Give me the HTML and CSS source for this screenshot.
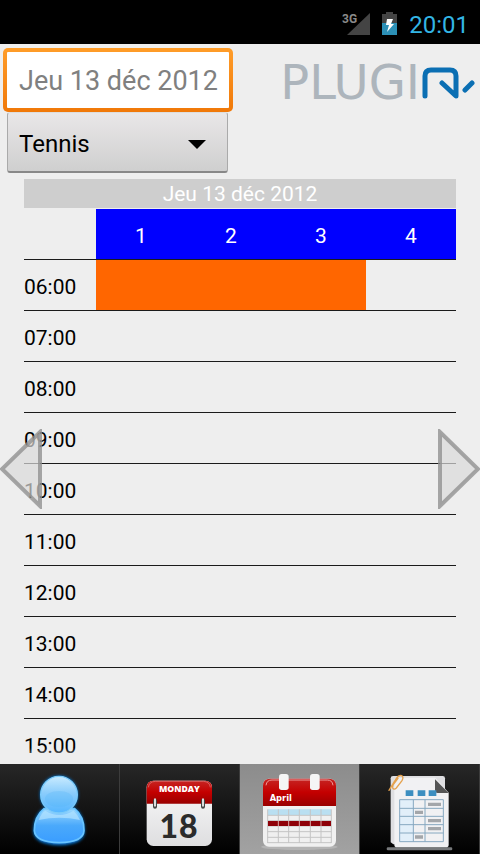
FILE: index.html
```html
<!DOCTYPE html>
<html lang="fr">
<head>
<meta charset="utf-8">
<meta name="viewport" content="width=device-width, initial-scale=1">
<title>Plugin</title>
<link rel="stylesheet" href="styles.css">
</head>
<body>
<div class="status">
  <svg class="status-icons" width="58" height="28" viewBox="0 0 58 28" aria-hidden="true">
    <text class="network" x="1" y="14">3G</text>
    <path d="M29 4V26H6Z" fill="#444"/>
    <path d="M45 3h7v3h-7z" fill="#444"/>
    <path d="M41 5h15v21h-15z" fill="#444"/>
    <path d="M41 14h15v12h-15z" fill="#2c90b6"/>
    <path d="M46 10h6l-2 5h3l-7 8 2-7h-3z" fill="#fff"/>
  </svg>
  <span class="clock">20:01</span>
</div>

<header class="header">
  <div class="filters">
    <input class="date" type="text" value="Jeu 13 déc 2012" aria-label="Date" readonly>
    <div class="sport">
      <select class="sport-select" aria-label="Sport"><option>Tennis</option></select>
      <svg class="caret" width="18" height="10" viewBox="0 0 18 10" aria-hidden="true"><path d="M0 0H18L9 9Z"/></svg>
    </div>
  </div>
  <div class="logo">
    <span class="logo-word">PLUGI</span>
    <svg class="logo-mark" width="53" height="34" viewBox="0 0 53 34" fill="none" stroke="#0b6fb3" stroke-width="5" stroke-linecap="round" stroke-linejoin="round" aria-hidden="true">
      <path d="M3 30V10Q3 4 9 4H28Q34 4 34 10V30L20 17M43 24L50 17"/>
    </svg>
  </div>
</header>

<main class="schedule">
  <h1 class="day">Jeu 13 déc 2012</h1>
  <table class="grid">
    <thead>
      <tr><td class="hour"></td><th>1</th><th>2</th><th>3</th><th>4</th></tr>
    </thead>
    <tbody>
      <tr><th class="hour">06:00</th><td class="booked" colspan="3"></td><td></td></tr>
      <tr><th class="hour">07:00</th><td colspan="4"></td></tr>
      <tr><th class="hour">08:00</th><td colspan="4"></td></tr>
      <tr><th class="hour">09:00</th><td colspan="4"></td></tr>
      <tr><th class="hour">10:00</th><td colspan="4"></td></tr>
      <tr><th class="hour">11:00</th><td colspan="4"></td></tr>
      <tr><th class="hour">12:00</th><td colspan="4"></td></tr>
      <tr><th class="hour">13:00</th><td colspan="4"></td></tr>
      <tr><th class="hour">14:00</th><td colspan="4"></td></tr>
      <tr><th class="hour">15:00</th><td colspan="4"></td></tr>
    </tbody>
  </table>
  <button class="arrow arrow-prev" aria-label="Jour précédent">
    <svg width="42" height="80" viewBox="0 0 42 80"><path d="M40 3V77L2 40Z"/></svg>
  </button>
  <button class="arrow arrow-next" aria-label="Jour suivant">
    <svg width="42" height="80" viewBox="0 0 42 80"><path d="M2 3V77L40 40Z"/></svg>
  </button>
</main>

<nav class="tabs">
  <a class="tab" href="#profil" aria-label="Profil">
    <svg width="120" height="90" viewBox="0 102 360 270" aria-hidden="true">
      <defs>
        <linearGradient id="head" x1="0" y1="0" x2="0" y2="1"><stop offset="0" stop-color="#c9ebff"/><stop offset=".45" stop-color="#8bcdfc"/><stop offset="1" stop-color="#55b6ff"/></linearGradient>
        <linearGradient id="torso" x1="0" y1="0" x2="0" y2="1"><stop offset="0" stop-color="#9edaff"/><stop offset=".5" stop-color="#4aa9fb"/><stop offset="1" stop-color="#3a9dff"/></linearGradient>
        <filter id="glow" x="-20%" y="-20%" width="140%" height="140%"><feGaussianBlur stdDeviation="5"/></filter>
      </defs>
      <path d="M128 236C108 252 100 278 100 304Q102 344 178 346Q254 344 254 304C254 278 246 252 228 236Z" fill="#0878d8" filter="url(#glow)"/>
      <circle cx="177" cy="194" r="57" fill="#0878d8" filter="url(#glow)"/>
      <path d="M132 236C112 252 103 276 103 302Q106 337 178 338Q250 337 252 302C252 276 244 252 224 236Z" fill="url(#torso)" stroke="#69c4ff" stroke-width="5"/>
      <path d="M116 270Q124 248 136 242Q178 268 220 242Q234 254 240 270Q178 256 116 270Z" fill="#b2e2ff" opacity=".7"/>
      <circle cx="177" cy="194" r="55" fill="url(#head)" stroke="#7ccbfa" stroke-width="4"/>
      <ellipse cx="177" cy="207" rx="42" ry="24" fill="#4fb2f8" opacity=".25"/>
    </svg>
  </a>
  <a class="tab" href="#jour" aria-label="Jour">
    <svg width="120" height="90" viewBox="0 27 360 270" aria-hidden="true">
      <defs>
        <linearGradient id="red" x1="0" y1="0" x2="0" y2="1"><stop offset="0" stop-color="#c62523"/><stop offset=".5" stop-color="#c40000"/><stop offset="1" stop-color="#990000"/></linearGradient>
        <linearGradient id="paper" x1="0" y1="0" x2="0" y2="1"><stop offset="0" stop-color="#fafafa"/><stop offset="1" stop-color="#dedee0"/></linearGradient>
      </defs>
      <rect x="80" y="77" width="196" height="196" rx="20" fill="url(#paper)"/>
      <path d="M80 146V99Q80 77 102 77H254Q276 77 276 99V146Z" fill="url(#red)"/>
      <path d="M85 97Q87 80 106 79H250Q269 80 271 97" fill="none" stroke="#e08080" stroke-width="2"/>
      <text class="monday" x="178" y="112">MONDAY</text>
      <g stroke-linecap="round"><path d="M105 137V155M249 137V155" stroke="#444" stroke-width="12"/><path d="M105 133V152M249 133V152" stroke="#ddd" stroke-width="6"/></g>
      <text class="daynum" x="146" y="248">1</text>
      <text class="daynum" x="205" y="248">8</text>
    </svg>
  </a>
  <a class="tab tab-active" href="#planning" aria-label="Planning" aria-current="page">
    <svg width="120" height="90" viewBox="0 27 360 270" aria-hidden="true">
      <ellipse cx="178" cy="276" rx="115" ry="9" fill="#c2c2c2" opacity=".6"/>
      <rect x="69" y="71" width="219" height="204" rx="18" fill="#f0f0f0"/>
      <path d="M69 153V92Q69 71 90 71H267Q288 71 288 92V153Z" fill="url(#red)"/>
      <path d="M78 91Q80 75 96 75H262Q277 75 279 91" fill="none" stroke="#e99" stroke-width="3"/>
      <rect x="117" y="57" width="29" height="48" rx="8" fill="#f5f5f5"/>
      <rect x="210" y="57" width="29" height="48" rx="8" fill="#f5f5f5"/>
      <text class="april" x="89" y="138">April</text>
      <path d="M84 163H273V180H84z" fill="#b9dff1"/>
      <path d="M82 181H274M82 197H274M82 213H274M82 230H274M82 247H274M82 263H274M83 163V264M115 163V264M146 163V264M178 163V264M211 163V264M243 163V264M274 163V264" fill="none" stroke="#c4c4c4" stroke-width="3"/>
      <path d="M84 198H273V213H84z" fill="#8e0008"/>
      <path d="M115 198V213M146 198V213M178 198V213M211 198V213M243 198V213" stroke="#d9a6a6" stroke-width="3"/>
    </svg>
  </a>
  <a class="tab" href="#reservations" aria-label="Réservations">
    <svg width="120" height="90" viewBox="0 27 360 270" aria-hidden="true">
      <rect x="80" y="277" width="197" height="9" rx="4" fill="#77797b"/>
      <path d="M92 70Q92 63 99 63H248Q255 63 255 70V268H100L92 262Z" fill="#dedee1"/>
      <path d="M103 76Q103 68 111 68H226L266 113V269Q266 277 258 277H111Q103 277 103 269Z" fill="#f1f1f3"/>
      <path d="M225 73L266 114H233Q225 114 225 106Z" fill="#555"/>
      <path d="M137 106h23v17h-23zM173 106h23v17h-23zM206 106h23v17h-23z" fill="#3c8ec0"/>
      <path d="M119 134H160V260H119z" fill="#e2eff9"/>
      <path d="M119 134H250V260H119zM160 134V260M195 134V260M119 160H250M119 184H250M119 209H250M119 234H250" fill="none" stroke="#86a8c0" stroke-width="3"/>
      <path d="M204 143h39v10h-39zM165 167h24v10h-24zM204 192h39v10h-39zM204 216h39v10h-39zM165 241h24v10h-24z" fill="#a3a6aa"/>
      <path d="M87 106L109 70Q116 59 125 62Q132 67 126 77L109 99Q102 106 98 99Q96 95 101 87L114 70" fill="none" stroke="#e5a24e" stroke-width="4" stroke-linecap="round"/>
    </svg>
  </a>
</nav>
</body>
</html>
```
FILE: styles.css
```css
* {
  box-sizing: border-box;
}

body {
  margin: 0;
  height: 100vh;
  display: flex;
  flex-direction: column;
  background: #eee;
  color: #000;
  font-family: Roboto, "Liberation Sans", sans-serif;
  font-size: 21px;
}

.status {
  height: 44px;
  flex: none;
  display: flex;
  justify-content: flex-end;
  align-items: center;
  gap: 10px;
  padding: 6px 11px 0 0;
  background: #000;
}

.status-icons {
  overflow: visible;
  margin-bottom: 4px;
}

.network {
  fill: #8a8a8a;
  font-size: 12px;
  font-weight: 700;
}

.clock {
  color: #33b5e5;
  font-size: 24px;
  line-height: 32px;
}

.header {
  flex: none;
  display: flex;
  justify-content: space-between;
  align-items: flex-start;
  padding: 4px 5px 0 3px;
}

.filters {
  width: 230px;
}

.date {
  display: block;
  width: 100%;
  height: 64px;
  padding: 2px 0 0 12px;
  border: 4px solid transparent;
  border-radius: 5px;
  background: linear-gradient(#fff, #fff) padding-box, linear-gradient(#ff9d2a, #f07808) border-box;
  color: #808080;
  font: inherit;
  font-size: 27px;
  outline: none;
}

.sport {
  position: relative;
  margin: 0 5px 0 4px;
}

.sport-select {
  display: block;
  width: 100%;
  height: 61px;
  padding: 4px 11px 0;
  appearance: none;
  border: 1px solid #aaa;
  border-top-color: #ddd;
  border-bottom: 2px solid #888;
  border-radius: 3px;
  background: linear-gradient(#e9e7e8, #cfcfcf);
  color: #000;
  font: inherit;
  font-size: 24px;
}

.caret {
  position: absolute;
  right: 22px;
  top: 28px;
  pointer-events: none;
}

.logo {
  display: flex;
  align-items: center;
  gap: 2px;
  height: 68px;
}

.logo-word {
  color: #adb5bc;
  font-family: "DejaVu Sans", sans-serif;
  font-size: 48px;
  line-height: 68px;
}

.logo-mark {
  margin-top: 2px;
}

.schedule {
  position: relative;
  flex: 1;
  min-height: 0;
  overflow: hidden;
  padding: 6px 24px 0;
}

.schedule::after {
  content: "";
  position: absolute;
  left: 0;
  right: 0;
  bottom: 0;
  height: 16px;
  background: linear-gradient(rgba(238, 238, 238, 0), #eee);
}

.day {
  margin: 0 0 1px;
  padding-top: 2px;
  background: #cecece;
  color: #fff;
  font-size: 21px;
  font-weight: 400;
  line-height: 27px;
  text-align: center;
}

.grid {
  width: 100%;
  table-layout: fixed;
  border-spacing: 0;
}

.grid th,
.grid td {
  height: 51px;
  padding: 3px 0 0;
  border-bottom: 1px solid #1a1a1a;
  font-weight: 400;
}

.grid thead th {
  background: #00f;
  color: #fff;
}

.grid .hour {
  width: 72px;
  text-align: left;
}

.grid .booked {
  background: #f60;
}

.arrow {
  position: absolute;
  top: 50%;
  transform: translateY(-50%);
  padding: 0;
  border: 0;
  background: none;
}

.arrow svg {
  display: block;
  fill: rgba(218, 218, 218, 0.7);
  stroke: rgba(145, 145, 145, 0.8);
  stroke-width: 4px;
}

.arrow-prev {
  left: 0;
}

.arrow-next {
  right: 0;
}

.tabs {
  flex: none;
  display: flex;
  background: #000;
}

.tab {
  flex: 1;
  min-width: 0;
  display: flex;
  justify-content: center;
  border-right: 1px solid #3c3c3c;
  background: linear-gradient(#272727, #141414 50%, #000);
}

.tab-active {
  background: linear-gradient(#8c8c8c, #a2a2a2);
}

.tab svg {
  flex: none;
}

.monday {
  fill: #fff;
  font-family: "Open Sans", sans-serif;
  font-size: 26px;
  font-weight: 800;
  text-anchor: middle;
}

.daynum {
  fill: #2b2b2b;
  font-family: Lato, sans-serif;
  font-size: 96px;
  font-weight: 900;
  text-anchor: middle;
}

.april {
  fill: #fff;
  font-family: "DejaVu Sans", sans-serif;
  font-size: 25px;
  font-weight: 700;
}
```
